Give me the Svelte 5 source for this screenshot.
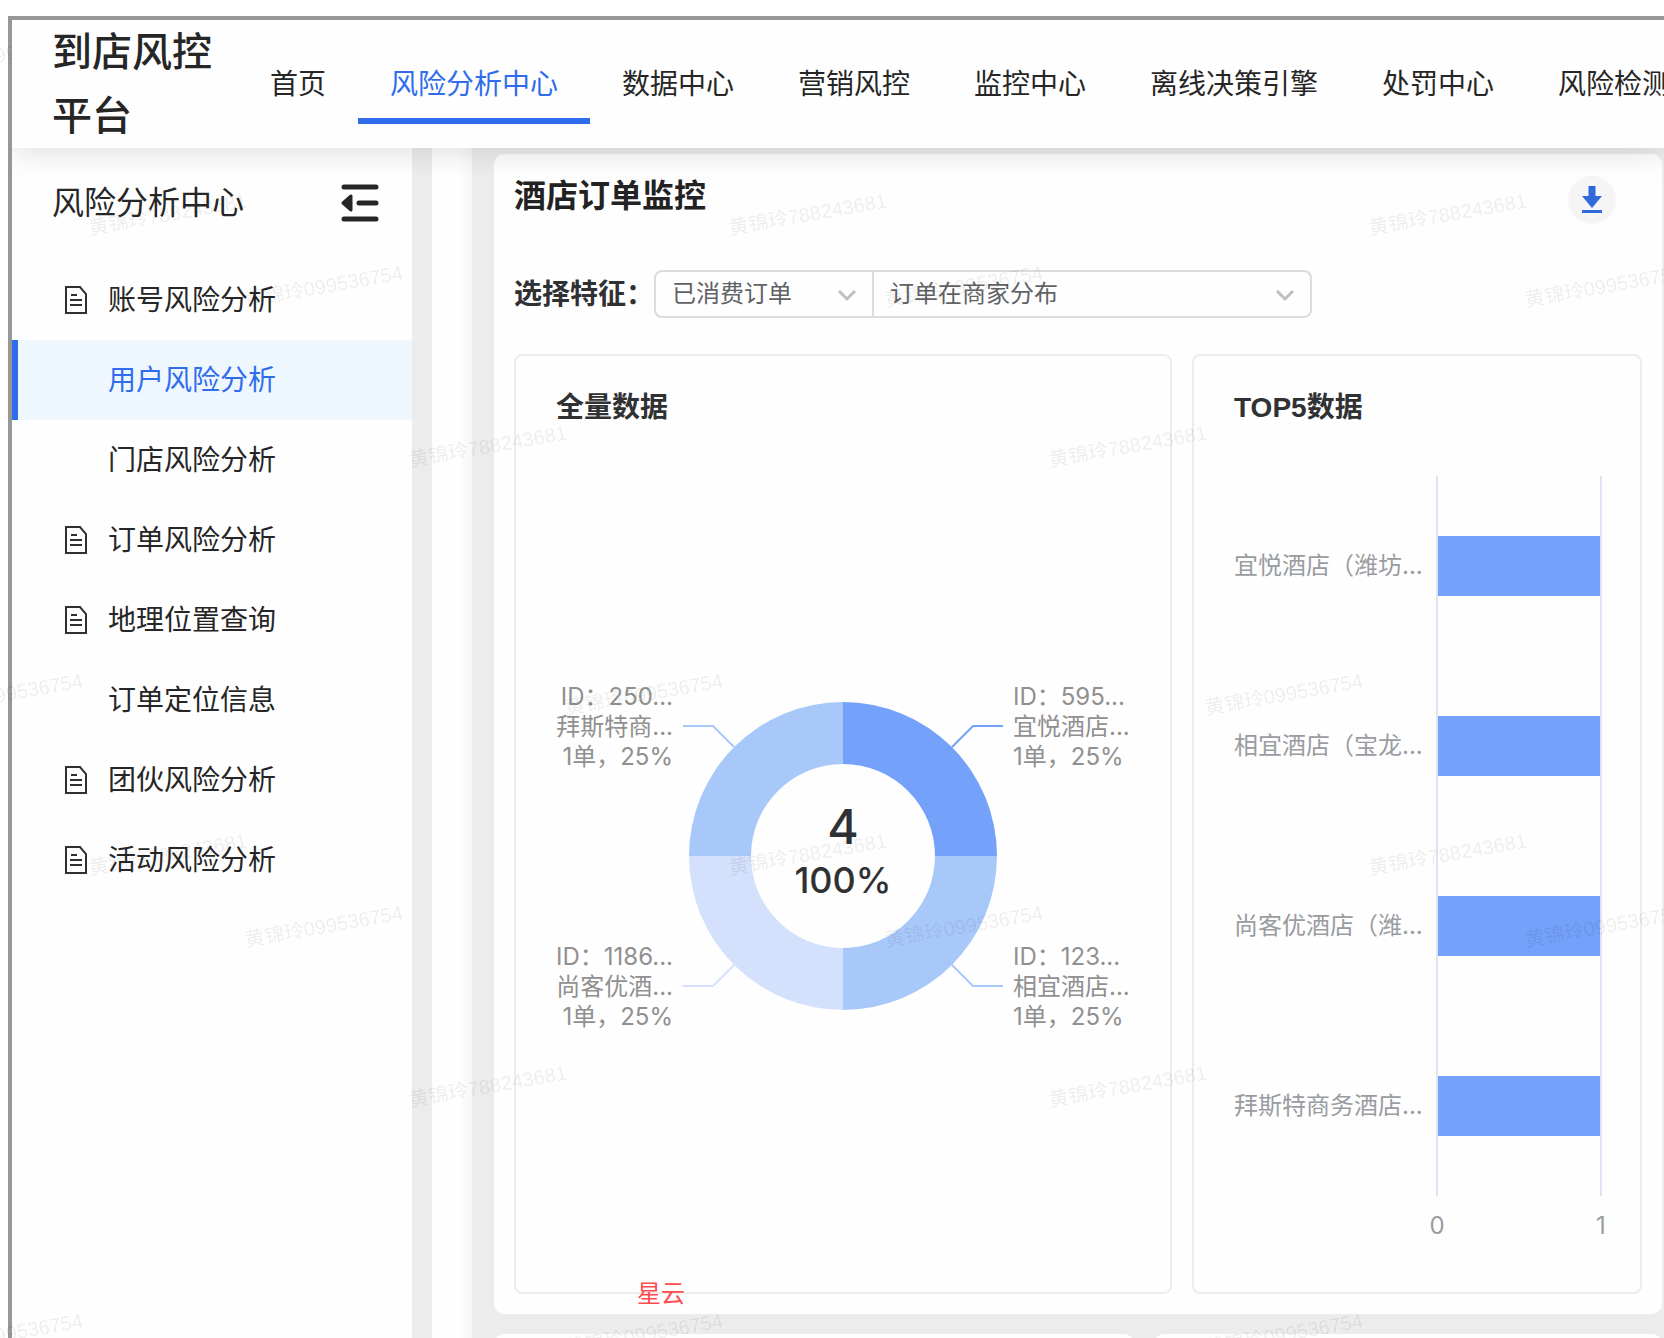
<script lang="ts">
  const nav = ['首页', '风险分析中心', '数据中心', '营销风控', '监控中心', '离线决策引擎', '处罚中心', '风险检测'];

  const menu = [
    { label: '账号风险分析', icon: true },
    { label: '用户风险分析', icon: false },
    { label: '门店风险分析', icon: false },
    { label: '订单风险分析', icon: true },
    { label: '地理位置查询', icon: true },
    { label: '订单定位信息', icon: false },
    { label: '团伙风险分析', icon: true },
    { label: '活动风险分析', icon: true },
  ];

  let activeNav = $state('风险分析中心');
  let activeMenu = $state('用户风险分析');
  let orderType = $state('已消费订单');
  let feature = $state('订单在商家分布');

  // clockwise from 12 o'clock; sx / sy pick the quadrant
  const slices = [
    { sx: 1, sy: -1, color: '#74a1f9', lines: ['ID：595...', '宜悦酒店...', '1单，25%'] },
    { sx: 1, sy: 1, color: '#a9c8fa', lines: ['ID：123...', '相宜酒店...', '1单，25%'] },
    { sx: -1, sy: 1, color: '#d3e1fc', lines: ['ID：1186...', '尚客优酒...', '1单，25%'] },
    { sx: -1, sy: -1, color: '#a9c8fa', lines: ['ID：250...', '拜斯特商...', '1单，25%'] },
  ];
  const R = 154, r = 92;

  function arc(sx: number, sy: number) {
    const sweep = sx * sy < 0 ? 1 : 0;
    return `M0 ${sy * R}A${R} ${R} 0 0 ${sweep} ${sx * R} 0H${sx * r}A${r} ${r} 0 0 ${1 - sweep} 0 ${sy * r}Z`;
  }

  const top5 = [
    { name: '宜悦酒店（潍坊...', value: 1 },
    { name: '相宜酒店（宝龙...', value: 1 },
    { name: '尚客优酒店（潍...', value: 1 },
    { name: '拜斯特商务酒店...', value: 1 },
  ];
  const max = 1;

  // watermark, laid out on a 640px tile
  let w = $state(1664);
  let h = $state(1338);
  const tile = [
    { x: -74, y: 75, text: '黄锦玲099536754' },
    { x: 90, y: 235, text: '黄锦玲788243681' },
    { x: 246, y: 307, text: '黄锦玲099536754' },
    { x: 410, y: 467, text: '黄锦玲788243681' },
  ];
  const marks = $derived.by(() => {
    const out: { x: number; y: number; text: string }[] = [];
    for (let x = 0; x <= w + 74; x += 640)
      for (let y = 0; y <= h; y += 640)
        for (const m of tile) out.push({ x: m.x + x, y: m.y + y, text: m.text });
    return out.filter((m) => m.x < w && m.y < h + 28);
  });

  const traceLines = ['33C4192DA0', '815BDDAF32', 'CD24643849', '34'];
  const traces = $derived.by(() => {
    const out: { x: number; y: number }[] = [];
    for (let i = -1; i * 538 < w; i++)
      for (let j = 0; j * 539 < h; j++) {
        out.push({ x: 309 + 538 * i - 23 * j, y: 272 - 20 * i + 539 * j });
        out.push({ x: 568 + 538 * i - 23 * j, y: 532 - 20 * i + 539 * j });
      }
    return out.filter((t) => t.x > 0 && t.x < w - 100 && t.y < h);
  });
</script>

<svelte:window bind:innerWidth={w} bind:innerHeight={h} />

<div class="page">
  <div class="window">
    <header class="header">
      <div class="logo">到店风控平台</div>
      <nav class="nav">
        {#each nav as item}
          <a href="#{item}" class:active={item === activeNav} onclick={() => (activeNav = item)}>{item}</a>
        {/each}
      </nav>
    </header>

    <div class="body">
      <aside class="sidebar">
        <div class="side-head">
          <span>风险分析中心</span>
          <button class="fold" aria-label="收起菜单">
            <svg width="40" height="40" viewBox="0 0 40 40" fill="none" stroke="#262626" stroke-width="5" stroke-linecap="round">
              <path d="M4 4H36M19 20H36M4 36H36" />
              <path d="M3 20L11 13V27Z" fill="#262626" stroke-width="3" stroke-linejoin="round" />
            </svg>
          </button>
        </div>
        <ul class="menu">
          {#each menu as item}
            <li>
              <a href="#{item.label}" class:active={item.label === activeMenu} onclick={() => (activeMenu = item.label)}>
                <span class="menu-icon">
                  {#if item.icon}
                    <svg width="22" height="28" viewBox="0 0 22 28" fill="none" stroke="#303133" stroke-width="2">
                      <path d="M1 1H15L21 8V27H1Z" />
                      <path d="M6 9H12M5 14H17M5 19H17" />
                    </svg>
                  {/if}
                </span>
                {item.label}
              </a>
            </li>
          {/each}
        </ul>
      </aside>

      <div class="rail"></div>

      <main class="main">
        <section class="card">
          <div class="card-head">
            <h1>酒店订单监控</h1>
            <button class="download" aria-label="下载">
              <svg width="20" height="28" viewBox="0 0 20 28" fill="#3069db">
                <path d="M6.5 0H13.5V10H20L10 22L0 10H6.5Z" />
                <path d="M0 24H20V27H0Z" />
              </svg>
            </button>
          </div>

          <div class="filters">
            <label for="order-type">选择特征：</label>
            <div class="select-group">
              <div class="select first">
                <select id="order-type" bind:value={orderType}>
                  <option>已消费订单</option>
                </select>
                <svg class="chevron" width="20" height="12" viewBox="0 0 20 12" fill="none" stroke="#bfbfbf" stroke-width="3"><path d="M2 1L10 9L18 1" /></svg>
              </div>
              <div class="select">
                <select aria-label="特征分布" bind:value={feature}>
                  <option>订单在商家分布</option>
                </select>
                <svg class="chevron" width="20" height="12" viewBox="0 0 20 12" fill="none" stroke="#bfbfbf" stroke-width="3"><path d="M2 1L10 9L18 1" /></svg>
              </div>
            </div>
          </div>

          <div class="panels">
            <div class="panel">
              <h2>全量数据</h2>
              <svg class="donut" viewBox="-287 -180 574 360">
                {#each slices as s}
                  <path d={arc(s.sx, s.sy)} fill={s.color} />
                  <path d="M{s.sx * 109} {s.sy * 109}L{s.sx * 130} {s.sy * 130}H{s.sx * 160}" fill="none" stroke={s.color} stroke-width="2" />
                  {#each s.lines as line, i}
                    <text class="slice-label" x={s.sx * 170} y={s.sy * 130 + (i - 1) * 30 + 9} text-anchor={s.sx > 0 ? 'start' : 'end'}>{line}</text>
                  {/each}
                {/each}
                <text class="total" y="-12">4</text>
                <text class="percent" y="37">100%</text>
              </svg>
            </div>

            <div class="panel">
              <h2>TOP5数据</h2>
              <div class="bars">
                <ul class="names">
                  {#each top5 as item}
                    <li>{item.name}</li>
                  {/each}
                </ul>
                <div class="plot">
                  {#each top5 as item}
                    <div class="band"><div class="bar" style="width:{(item.value / max) * 100}%"></div></div>
                  {/each}
                </div>
                <div class="axis"><span>0</span><span>{max}</span></div>
              </div>
            </div>
          </div>
          <span class="tag">星云</span>
        </section>

        <div class="next">
          <section class="card"></section>
          <section class="card"></section>
        </div>
      </main>
    </div>
  </div>

  <svg class="watermark" width="100%" height="100%" aria-hidden="true">
    {#each marks as m}
      <text class="mark" transform="translate({m.x} {m.y}) rotate(-10)">{m.text}</text>
    {/each}
    {#each traces as t}
      <g class="trace" transform="translate({t.x} {t.y}) rotate(-44)">
        {#each traceLines as line, i}
          <text y={i * 36}>{line}</text>
        {/each}
      </g>
    {/each}
  </svg>
</div>

<style>
  :global(body) { margin: 0; background: #fff; }
  ul { list-style: none; margin: 0; padding: 0; }
  a { text-decoration: none; color: inherit; }
  button { border: 0; padding: 0; background: none; cursor: pointer; }
  h1, h2 { margin: 0; line-height: 40px; }

  .page {
    position: relative;
    box-sizing: border-box;
    height: 100vh;
    padding: 16px 0 0 8px;
    overflow: hidden;
    font-family: Inter, 'Noto Sans CJK SC', sans-serif;
    color: #262626;
  }
  .window {
    box-sizing: border-box;
    height: 100%;
    display: flex;
    flex-direction: column;
    border: solid #979797;
    border-width: 4px 0 0 4px;
  }

  .header {
    position: relative;
    z-index: 1;
    flex: none;
    display: flex;
    align-items: center;
    gap: 26px;
    padding-left: 40px;
    background: #fefefe;
    box-shadow: 0 4px 28px rgba(0, 0, 0, 0.13);
    clip-path: inset(0 0 -40px 0);
  }
  .logo { flex: none; width: 160px; font-size: 40px; font-weight: 500; line-height: 64px; }
  .nav { flex: 1; min-width: 0; display: flex; overflow: hidden; }
  .nav a {
    flex: none;
    box-sizing: border-box;
    height: 80px;
    padding: 0 32px;
    font-size: 28px;
    line-height: 80px;
    white-space: nowrap;
  }
  .nav a.active { color: #2f6dec; border-bottom: 6px solid #2f6dec; }

  .body { flex: 1; min-height: 0; display: flex; background: #ececec; }

  .sidebar { flex: none; width: 400px; background: #fefefe; }
  .side-head {
    display: flex;
    justify-content: space-between;
    align-items: center;
    height: 110px;
    margin-bottom: 2px;
    padding: 0 32px 0 40px;
    font-size: 32px;
    line-height: 40px;
  }
  .fold { display: flex; }
  .menu a {
    display: flex;
    align-items: center;
    gap: 20px;
    height: 80px;
    padding-left: 53px;
    font-size: 28px;
    line-height: 80px;
  }
  .menu a.active { padding-left: 47px; border-left: 6px solid #2f6dec; background: #eff7fe; color: #2f6dec; }
  .menu-icon { display: flex; width: 23px; }

  .rail {
    flex: none;
    width: 40px;
    margin: 0 22px 0 20px;
    background: linear-gradient(to right, #fefefe 70%, #f7f7f7);
  }

  .main { flex: 1; min-width: 0; padding: 6px 2px 0 0; overflow: hidden; }
  .card { position: relative; padding: 22px 20px 20px; border-radius: 10px; background: #fefefe; }
  .card-head { display: flex; justify-content: space-between; align-items: flex-start; margin-bottom: 46px; }
  h1 { font-size: 32px; font-weight: 600; color: #222; }
  .download {
    display: flex;
    align-items: center;
    justify-content: center;
    width: 48px;
    height: 48px;
    margin-right: 26px;
    border-radius: 50%;
    background: #f5f5f5;
  }

  .filters { display: flex; align-items: center; margin-bottom: 36px; }
  .filters label { font-size: 28px; font-weight: 600; line-height: 48px; color: #303133; }
  .select-group {
    box-sizing: border-box;
    display: flex;
    width: 658px;
    height: 48px;
    border: 2px solid #dcdcdc;
    border-radius: 8px;
  }
  .select { position: relative; flex: 1; }
  .select.first { flex: none; width: 216px; border-right: 2px solid #dcdcdc; }
  select {
    appearance: none;
    width: 100%;
    height: 44px;
    padding: 0 48px 0 16px;
    border: 0;
    background: none;
    font: 24px/44px Inter, 'Noto Sans CJK SC', sans-serif;
    color: #606266;
  }
  .chevron { position: absolute; right: 15px; top: 18px; pointer-events: none; }

  .panels { display: grid; grid-template-columns: minmax(0, 1fr) 450px; gap: 20px; }
  .panel {
    box-sizing: border-box;
    display: flex;
    flex-direction: column;
    min-height: 940px;
    padding: 32px 40px 8px;
    border: 2px solid #ededed;
    border-radius: 8px;
  }
  h2 { font: 600 28px/40px 'Liberation Sans', 'Noto Sans CJK SC', sans-serif; color: #303133; }

  .donut { display: block; width: 100%; max-width: 574px; margin: auto; overflow: visible; }
  .slice-label { font-size: 24px; fill: #909090; }
  .total, .percent { text-anchor: middle; fill: #303133; font-weight: 500; }
  .total { font-size: 48px; }
  .percent { font-size: 36px; }

  .bars {
    display: grid;
    grid-template-columns: 202px 1fr;
    margin: 48px -2px 0 0;
    font-size: 24px;
    color: #999ca1;
  }
  .names li { height: 180px; line-height: 180px; white-space: nowrap; }
  .plot { border: solid #e0e4f2; border-width: 0 2px; }
  .band { display: flex; align-items: center; height: 180px; }
  .bar { height: 60px; background: #74a1f9; }
  .axis { grid-column: 2; display: flex; justify-content: space-between; margin: 10px -11px 0; line-height: 40px; }
  .axis span { width: 24px; text-align: center; }

  .tag {
    position: absolute;
    left: 143px;
    bottom: 4px;
    font-size: 24px;
    line-height: 32px;
    color: #ff4d4f;
  }

  .next { display: grid; grid-template-columns: 640px 1fr; gap: 20px; margin-top: 20px; }
  .next .card { height: 200px; }

  .watermark { position: absolute; inset: 0; pointer-events: none; }
  .mark { font: 20px 'Liberation Sans', 'Noto Sans CJK SC', sans-serif; fill: rgba(0, 0, 0, 0.08); }
  .trace { font: 30px Inter, sans-serif; fill: rgba(0, 0, 0, 0.016); }
</style>
